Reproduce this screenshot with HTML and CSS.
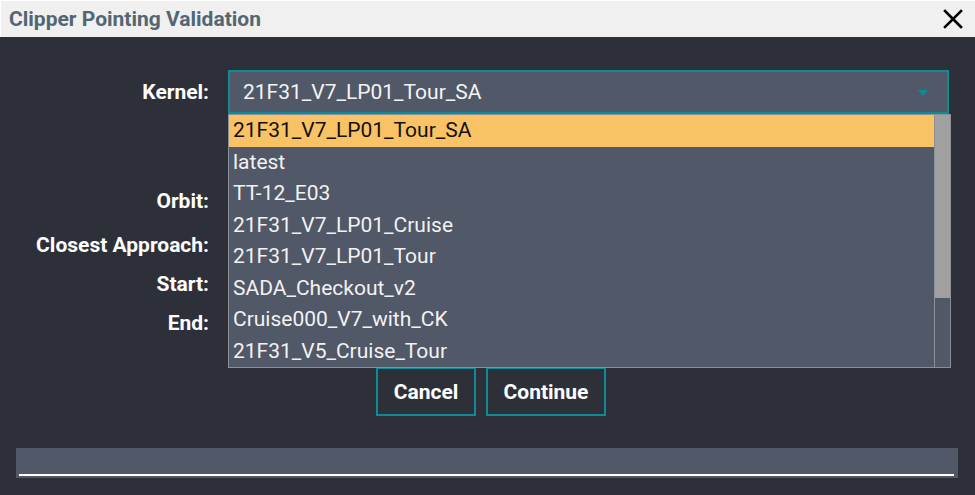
FILE: index.html
```html
<!DOCTYPE html>
<html>
<head>
<meta charset="utf-8">
<title>Clipper Pointing Validation</title>
<link rel="stylesheet" href="styles.css">
</head>
<body>
<div class="window">
  <header class="titlebar">
    <span class="title">Clipper Pointing Validation</span>
    <span class="close" aria-label="Close">
      <svg width="20" height="20" viewBox="0 0 20 20"><path d="M2 2 L18 18 M18 2 L2 18" stroke="#000" stroke-width="2.6" stroke-linecap="square"/></svg>
    </span>
  </header>
  <main class="content">
    <div class="form">
      <div class="row row-lg">
        <label class="label">Kernel:</label>
        <div class="select">
          <span class="select-value">21F31_V7_LP01_Tour_SA</span>
          <span class="caret"></span>
          <div class="dropdown">
            <ul class="options">
              <li class="option selected">21F31_V7_LP01_Tour_SA</li>
              <li class="option">latest</li>
              <li class="option">TT-12_E03</li>
              <li class="option">21F31_V7_LP01_Cruise</li>
              <li class="option">21F31_V7_LP01_Tour</li>
              <li class="option">SADA_Checkout_v2</li>
              <li class="option">Cruise000_V7_with_CK</li>
              <li class="option">21F31_V5_Cruise_Tour</li>
            </ul>
            <div class="scrollbar"><div class="thumb"></div></div>
          </div>
        </div>
      </div>
      <div class="row row-spacer"></div>
      <div class="row row-lg">
        <label class="label">Orbit:</label>
        <div class="field"></div>
      </div>
      <div class="row row-lg">
        <label class="label">Closest Approach:</label>
        <div class="field"></div>
      </div>
      <div class="row row-sm">
        <label class="label">Start:</label>
        <div class="field"></div>
      </div>
      <div class="row row-lg">
        <label class="label">End:</label>
        <div class="field"></div>
      </div>
    </div>
    <div class="actions">
      <button class="btn btn-cancel">Cancel</button>
      <button class="btn btn-continue">Continue</button>
    </div>
    <div class="progress"><div class="progress-line"></div></div>
  </main>
</div>
</body>
</html>
```

FILE: styles.css
```css
* { box-sizing: border-box; }
html, body { margin: 0; padding: 0; }
body {
  background: #2e3039;
  font-family: Roboto, "Liberation Sans", sans-serif;
  width: 975px;
  height: 495px;
  overflow: hidden;
}
.window {
  width: 975px;
  height: 495px;
  display: flex;
  flex-direction: column;
}
.titlebar {
  height: 37px;
  flex: none;
  background: #f0f0f0;
  border-top: 1px solid #fff;
  border-left: 1px solid #fff;
  display: flex;
  align-items: center;
  justify-content: space-between;
  padding: 0 12px 0 8px;
}
.title {
  font-size: 21px;
  font-weight: 700;
  color: #536672;
}
.close { display: flex; }
.content {
  flex: 1;
  padding-top: 33px;
}
.row {
  display: flex;
  align-items: center;
  gap: 19px;
}
.row-lg { height: 44px; }
.row-sm { height: 34px; }
.row-spacer { height: 65px; }
.label {
  width: 209px;
  flex: none;
  text-align: right;
  font-size: 21px;
  font-weight: 700;
  color: #fff;
}
.field { width: 721px; height: 100%; }
.select {
  position: relative;
  width: 721px;
  height: 44px;
  border: 2px solid #0f8b93;
  background: #515867;
  display: flex;
  align-items: center;
  padding: 0 19px 0 13px;
  color: #f4f4f4;
  font-size: 21px;
}
.caret {
  margin-left: auto;
  margin-top: 2px;
  width: 0;
  height: 0;
  border-left: 5px solid transparent;
  border-right: 5px solid transparent;
  border-top: 6px solid #0f8b93;
}
.dropdown {
  position: absolute;
  top: 42px;
  left: -2px;
  width: 723px;
  height: 254px;
  border: 1px solid #8d9097;
  background: #515867;
  display: flex;
  z-index: 5;
}
.options {
  list-style: none;
  margin: 0;
  padding: 0;
  flex: 1;
}
.option {
  height: 31.5px;
  line-height: 31.5px;
  padding-left: 4px;
  font-size: 21px;
  color: #f2f2f2;
}
.option.selected {
  background: #f9c265;
  color: #111;
}
.scrollbar {
  width: 16px;
  flex: none;
  border-left: 1px solid #8d9097;
  background: #515867;
}
.thumb {
  height: 183px;
  background: #a0a0a0;
}
.actions {
  display: flex;
  justify-content: center;
  gap: 10px;
  margin-top: 22px;
  padding-left: 7px;
}
.btn {
  height: 49px;
  border: 2px solid #0f8b93;
  background: transparent;
  color: #fff;
  font-family: inherit;
  font-size: 21px;
  font-weight: 700;
  padding: 0;
}
.btn-cancel { width: 100px; }
.btn-continue { width: 120px; }
.progress {
  margin: 32px 17px 0 16px;
  height: 30px;
  background: #515867;
  display: flex;
  align-items: flex-end;
  padding: 0 4px 2px 3px;
}
.progress-line {
  flex: 1;
  height: 2px;
  background: #fff;
}
```
